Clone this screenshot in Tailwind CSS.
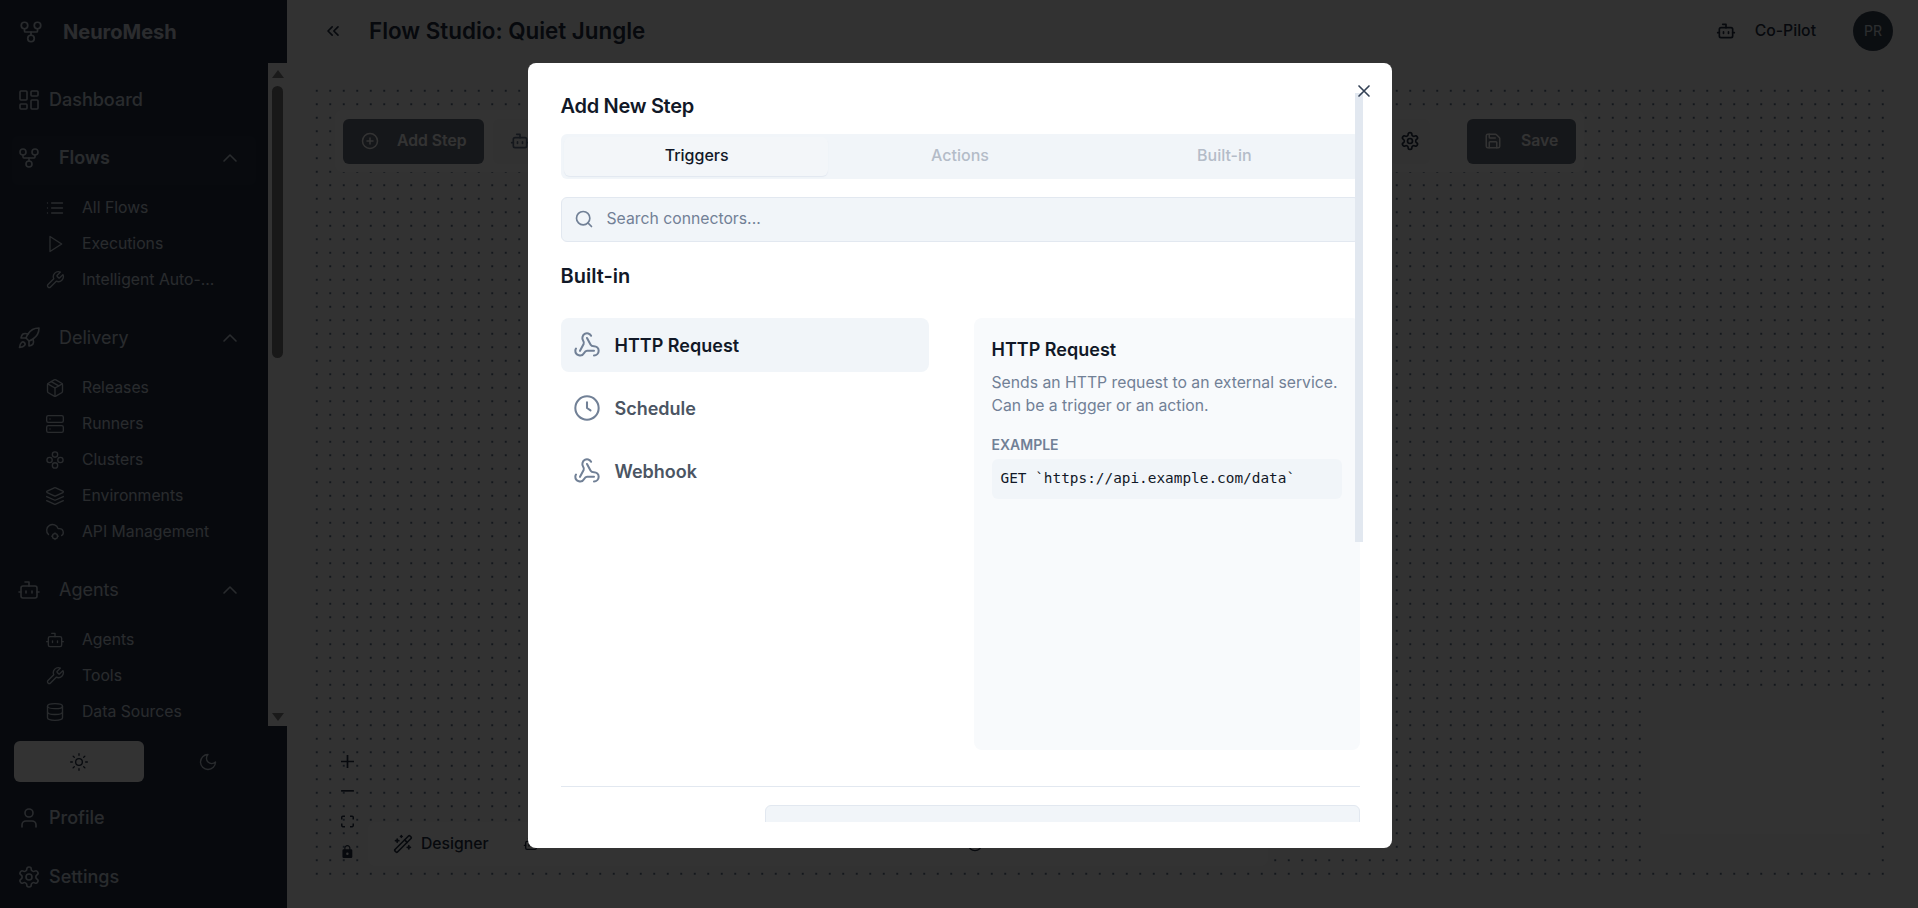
<!DOCTYPE html>
<html lang="en">
<head>
    <meta charset="UTF-8">
    <meta name="viewport" content="width=device-width, initial-scale=1.0">
    <title>Flow Studio: Quiet Jungle</title>
    <script src="https://cdn.jsdelivr.net/npm/@tailwindcss/browser@4"></script>
</head>
<body class="font-['Inter','Noto_Sans',sans-serif] overflow-hidden stroke-2">

    <!-- Icon sprite -->
    <svg class="hidden" xmlns="http://www.w3.org/2000/svg">
        <symbol id="i-fork" viewBox="0 0 24 24" fill="none" stroke="currentColor" stroke-linecap="round" stroke-linejoin="round"><circle cx="12" cy="18" r="3"/><circle cx="6" cy="6" r="3"/><circle cx="18" cy="6" r="3"/><path d="M18 9v2c0 .6-.4 1-1 1H7c-.6 0-1-.4-1-1V9"/><path d="M12 12v3"/></symbol>
        <symbol id="i-dash" viewBox="0 0 24 24" fill="none" stroke="currentColor" stroke-linecap="round" stroke-linejoin="round"><rect width="7" height="9" x="3" y="3" rx="1"/><rect width="7" height="5" x="14" y="3" rx="1"/><rect width="7" height="9" x="14" y="12" rx="1"/><rect width="7" height="5" x="3" y="16" rx="1"/></symbol>
        <symbol id="i-rocket" viewBox="0 0 24 24" fill="none" stroke="currentColor" stroke-linecap="round" stroke-linejoin="round"><path d="M4.5 16.5c-1.5 1.26-2 5-2 5s3.74-.5 5-2c.71-.84.7-2.13-.09-2.91a2.18 2.18 0 0 0-2.91-.09z"/><path d="m12 15-3-3a22 22 0 0 1 2-3.95A12.88 12.88 0 0 1 22 2c0 2.72-.78 7.5-6 11a22.35 22.35 0 0 1-4 2z"/><path d="M9 12H4s.55-3.03 2-4c1.62-1.08 5 0 5 0"/><path d="M12 15v5s3.03-.55 4-2c1.08-1.62 0-5 0-5"/></symbol>
        <symbol id="i-up" viewBox="0 0 24 24" fill="none" stroke="currentColor" stroke-linecap="round" stroke-linejoin="round"><path d="m18 15-6-6-6 6"/></symbol>
        <symbol id="i-list" viewBox="0 0 24 24" fill="none" stroke="currentColor" stroke-linecap="round" stroke-linejoin="round"><path d="M3 12h.01M3 18h.01M3 6h.01M8 12h13M8 18h13M8 6h13"/></symbol>
        <symbol id="i-play" viewBox="0 0 24 24" fill="none" stroke="currentColor" stroke-linecap="round" stroke-linejoin="round"><polygon points="6 3 20 12 6 21 6 3"/></symbol>
        <symbol id="i-wrench" viewBox="0 0 24 24" fill="none" stroke="currentColor" stroke-linecap="round" stroke-linejoin="round"><path d="M14.7 6.3a1 1 0 0 0 0 1.4l1.6 1.6a1 1 0 0 0 1.4 0l3.77-3.77a6 6 0 0 1-7.94 7.94l-6.91 6.91a2.12 2.12 0 0 1-3-3l6.91-6.91a6 6 0 0 1 7.94-7.94l-3.76 3.76z"/></symbol>
        <symbol id="i-package" viewBox="0 0 24 24" fill="none" stroke="currentColor" stroke-linecap="round" stroke-linejoin="round"><path d="m7.5 4.27 9 5.15"/><path d="M21 8a2 2 0 0 0-1-1.73l-7-4a2 2 0 0 0-2 0l-7 4A2 2 0 0 0 3 8v8a2 2 0 0 0 1 1.73l7 4a2 2 0 0 0 2 0l7-4A2 2 0 0 0 21 16Z"/><path d="m3.3 7 8.7 5 8.7-5"/><path d="M12 22V12"/></symbol>
        <symbol id="i-server" viewBox="0 0 24 24" fill="none" stroke="currentColor" stroke-linecap="round" stroke-linejoin="round"><rect width="20" height="8" x="2" y="2" rx="2"/><rect width="20" height="8" x="2" y="14" rx="2"/><path d="M6 6h.01M6 18h.01"/></symbol>
        <symbol id="i-cluster" viewBox="0 0 24 24" fill="none" stroke="currentColor" stroke-linecap="round" stroke-linejoin="round"><circle cx="12" cy="5.5" r="3.2"/><circle cx="12" cy="18.5" r="3.2"/><circle cx="5.5" cy="12" r="3.2"/><circle cx="18.5" cy="12" r="3.2"/></symbol>
        <symbol id="i-layers" viewBox="0 0 24 24" fill="none" stroke="currentColor" stroke-linecap="round" stroke-linejoin="round"><path d="M12.83 2.18a2 2 0 0 0-1.66 0L2.6 6.08a1 1 0 0 0 0 1.83l8.58 3.91a2 2 0 0 0 1.66 0l8.58-3.9a1 1 0 0 0 0-1.83Z"/><path d="m22 17.65-9.17 4.16a2 2 0 0 1-1.66 0L2 17.65"/><path d="m22 12.65-9.17 4.16a2 2 0 0 1-1.66 0L2 12.65"/></symbol>
        <symbol id="i-cloud" viewBox="0 0 24 24" fill="none" stroke="currentColor" stroke-linecap="round" stroke-linejoin="round"><path d="M4.2 15.1A7 7 0 1 1 15.71 8h1.79a4.5 4.5 0 0 1 2.5 8.2"/><circle cx="12" cy="17" r="3"/><path d="M12 13v.5M12 20.5v.5M8 17h.5M15.5 17h.5"/></symbol>
        <symbol id="i-bot" viewBox="0 0 24 24" fill="none" stroke="currentColor" stroke-linecap="round" stroke-linejoin="round"><path d="M12 8V4H8"/><rect width="16" height="12" x="4" y="8" rx="2"/><path d="M2 14h2M20 14h2M15 13v2M9 13v2"/></symbol>
        <symbol id="i-db" viewBox="0 0 24 24" fill="none" stroke="currentColor" stroke-linecap="round" stroke-linejoin="round"><ellipse cx="12" cy="5" rx="9" ry="3"/><path d="M3 5V19A9 3 0 0 0 21 19V5"/><path d="M3 12A9 3 0 0 0 21 12"/></symbol>
        <symbol id="i-sun" viewBox="0 0 24 24" fill="none" stroke="currentColor" stroke-linecap="round" stroke-linejoin="round"><circle cx="12" cy="12" r="4"/><path d="M12 2v2M12 20v2M4.93 4.93l1.41 1.41M17.66 17.66l1.41 1.41M2 12h2M20 12h2M6.34 17.66l-1.41 1.41M19.07 4.93l-1.41 1.41"/></symbol>
        <symbol id="i-moon" viewBox="0 0 24 24" fill="none" stroke="currentColor" stroke-linecap="round" stroke-linejoin="round"><path d="M12 3a6 6 0 0 0 9 9 9 9 0 1 1-9-9Z"/></symbol>
        <symbol id="i-user" viewBox="0 0 24 24" fill="none" stroke="currentColor" stroke-linecap="round" stroke-linejoin="round"><path d="M19 21v-2a4 4 0 0 0-4-4H9a4 4 0 0 0-4 4v2"/><circle cx="12" cy="7" r="4"/></symbol>
        <symbol id="i-gear" viewBox="0 0 24 24" fill="none" stroke="currentColor" stroke-linecap="round" stroke-linejoin="round"><path d="M12.22 2h-.44a2 2 0 0 0-2 2v.18a2 2 0 0 1-1 1.73l-.43.25a2 2 0 0 1-2 0l-.15-.08a2 2 0 0 0-2.73.73l-.22.38a2 2 0 0 0 .73 2.73l.15.1a2 2 0 0 1 1 1.72v.51a2 2 0 0 1-1 1.74l-.15.09a2 2 0 0 0-.73 2.73l.22.38a2 2 0 0 0 2.73.73l.15-.08a2 2 0 0 1 2 0l.43.25a2 2 0 0 1 1 1.73V20a2 2 0 0 0 2 2h.44a2 2 0 0 0 2-2v-.18a2 2 0 0 1 1-1.73l.43-.25a2 2 0 0 1 2 0l.15.08a2 2 0 0 0 2.73-.73l.22-.39a2 2 0 0 0-.73-2.73l-.15-.08a2 2 0 0 1-1-1.74v-.5a2 2 0 0 1 1-1.74l.15-.09a2 2 0 0 0 .73-2.73l-.22-.38a2 2 0 0 0-2.73-.73l-.15.08a2 2 0 0 1-2 0l-.43-.25a2 2 0 0 1-1-1.73V4a2 2 0 0 0-2-2z"/><circle cx="12" cy="12" r="3"/></symbol>
        <symbol id="i-webhook" viewBox="0 0 24 24" fill="none" stroke="currentColor" stroke-linecap="round" stroke-linejoin="round"><path d="M18 16.98h-5.99c-1.1 0-1.95.94-2.48 1.9A4 4 0 0 1 2 17c.01-.7.2-1.4.57-2"/><path d="m6 17 3.13-5.78c.53-.97.1-2.18-.5-3.1a4 4 0 1 1 6.89-4.06"/><path d="m12 6 3.13 5.73C15.66 12.7 16.9 13 18 13a4 4 0 0 1 0 8"/></symbol>
        <symbol id="i-clock" viewBox="0 0 24 24" fill="none" stroke="currentColor" stroke-linecap="round" stroke-linejoin="round"><circle cx="12" cy="12" r="10"/><path d="M12 7v5l3 2"/></symbol>
        <symbol id="i-search" viewBox="0 0 24 24" fill="none" stroke="currentColor" stroke-linecap="round" stroke-linejoin="round"><path d="m21 21-4.3-4.3"/><circle cx="11" cy="11" r="8"/></symbol>
        <symbol id="i-x" viewBox="0 0 24 24" fill="none" stroke="currentColor" stroke-linecap="round" stroke-linejoin="round"><path d="M18 6 6 18M6 6l12 12"/></symbol>
        <symbol id="i-chevrons" viewBox="0 0 24 24" fill="none" stroke="currentColor" stroke-linecap="round" stroke-linejoin="round"><path d="m11 17-5-5 5-5M18 17l-5-5 5-5"/></symbol>
        <symbol id="i-plus-c" viewBox="0 0 24 24" fill="none" stroke="currentColor" stroke-linecap="round" stroke-linejoin="round"><circle cx="12" cy="12" r="10"/><path d="M8 12h8M12 8v8"/></symbol>
        <symbol id="i-save" viewBox="0 0 24 24" fill="none" stroke="currentColor" stroke-linecap="round" stroke-linejoin="round"><path d="M15.2 3a2 2 0 0 1 1.4.6l3.8 3.8a2 2 0 0 1 .6 1.4V19a2 2 0 0 1-2 2H5a2 2 0 0 1-2-2V5a2 2 0 0 1 2-2z"/><path d="M17 21v-7a1 1 0 0 0-1-1H8a1 1 0 0 0-1 1v7"/><path d="M7 3v4a1 1 0 0 0 1 1h7"/></symbol>
        <symbol id="i-wand" viewBox="0 0 24 24" fill="none" stroke="currentColor" stroke-linecap="round" stroke-linejoin="round"><path d="m21.64 3.64-1.28-1.28a1.21 1.21 0 0 0-1.72 0L2.36 18.64a1.21 1.21 0 0 0 0 1.72l1.28 1.28a1.2 1.2 0 0 0 1.72 0L21.64 5.36a1.2 1.2 0 0 0 0-1.72"/><path d="m14 7 3 3M5 6v4M19 14v4M10 2v2M7 8H3M21 16h-4M11 3H9"/></symbol>
    </svg>

    <div class="flex h-[908px] w-[1918px] bg-[#f8f9fa]">

        <!-- Sidebar -->
        <aside class="w-[287px] shrink-0 flex flex-col bg-[#243044] text-[#cbd5e1] stroke-[1.6]">
            <div class="h-[63px] shrink-0 flex items-center pl-[18px] gap-[19px]">
                <svg class="w-[26px] h-[26px]"><use href="#i-fork"/></svg>
                <span class="text-xl font-bold text-[#d5dce5]">NeuroMesh</span>
            </div>

            <div class="h-[663px] shrink-0 flex overflow-hidden">
                <nav class="w-[268px] shrink-0">
                    <a class="mt-[15px] h-[44px] flex items-center pl-[17px] gap-2 text-lg font-medium"><svg class="w-6 h-6"><use href="#i-dash"/></svg>Dashboard</a>

                    <div class="mt-[14px] mx-3 h-[49px] pb-[5px] pl-[5px] pr-[14px] flex items-center rounded-md bg-[#283549] text-lg font-semibold">
                        <svg class="w-6 h-6"><use href="#i-fork"/></svg>
                        <span class="ml-[18px] flex-1">Flows</span>
                        <svg class="w-6 h-6"><use href="#i-up"/></svg>
                    </div>
                    <div class="mt-[5px] pl-[45px] text-[15.75px]">
                        <a class="h-9 flex items-center gap-[17px]"><svg class="w-5 h-5"><use href="#i-list"/></svg>All Flows</a>
                        <a class="h-9 flex items-center gap-[17px]"><svg class="w-5 h-5"><use href="#i-play"/></svg>Executions</a>
                        <a class="h-9 flex items-center gap-[17px]"><svg class="w-5 h-5"><use href="#i-wrench"/></svg>Intelligent Auto-...</a>
                    </div>

                    <div class="mt-4 h-12 pl-[17px] pr-[26px] flex items-center text-lg">
                        <svg class="w-6 h-6"><use href="#i-rocket"/></svg>
                        <span class="ml-[18px] flex-1">Delivery</span>
                        <svg class="w-6 h-6"><use href="#i-up"/></svg>
                    </div>
                    <div class="mt-2 pl-[45px] text-[15.75px]">
                        <a class="h-9 flex items-center gap-[17px]"><svg class="w-5 h-5"><use href="#i-package"/></svg>Releases</a>
                        <a class="h-9 flex items-center gap-[17px]"><svg class="w-5 h-5"><use href="#i-server"/></svg>Runners</a>
                        <a class="h-9 flex items-center gap-[17px]"><svg class="w-5 h-5"><use href="#i-cluster"/></svg>Clusters</a>
                        <a class="h-9 flex items-center gap-[17px]"><svg class="w-5 h-5"><use href="#i-layers"/></svg>Environments</a>
                        <a class="h-9 flex items-center gap-[17px]"><svg class="w-5 h-5"><use href="#i-cloud"/></svg>API Management</a>
                    </div>

                    <div class="mt-4 h-12 pl-[17px] pr-[26px] flex items-center text-lg">
                        <svg class="w-6 h-6"><use href="#i-bot"/></svg>
                        <span class="ml-[18px] flex-1">Agents</span>
                        <svg class="w-6 h-6"><use href="#i-up"/></svg>
                    </div>
                    <div class="mt-2 pl-[45px] text-[15.75px]">
                        <a class="h-9 flex items-center gap-[17px]"><svg class="w-5 h-5"><use href="#i-bot"/></svg>Agents</a>
                        <a class="h-9 flex items-center gap-[17px]"><svg class="w-5 h-5"><use href="#i-wrench"/></svg>Tools</a>
                        <a class="h-9 flex items-center gap-[17px]"><svg class="w-5 h-5"><use href="#i-db"/></svg>Data Sources</a>
                    </div>
                </nav>

                <!-- Scrollbar -->
                <div class="w-[19px] shrink-0 bg-[#f8f9fa] flex flex-col items-center">
                    <svg class="w-3 h-2 mt-[7px] text-[#808080]" viewBox="0 0 12 8"><polygon points="6,0 12,8 0,8" fill="currentColor"/></svg>
                    <div class="w-[11px] h-[272px] mt-2 rounded-md bg-[#777]"></div>
                    <svg class="w-3 h-2 mt-[355px] text-[#808080]" viewBox="0 0 12 8"><polygon points="0,0 12,0 6,8" fill="currentColor"/></svg>
                </div>
            </div>

            <div class="mt-[15px] mx-[14px] grid grid-cols-2 h-[41px] shrink-0">
                <div class="rounded-md bg-white text-[#243044] flex items-center justify-center"><svg class="w-5 h-5"><use href="#i-sun"/></svg></div>
                <div class="flex items-center justify-center"><svg class="w-5 h-5"><use href="#i-moon"/></svg></div>
            </div>
            <a class="mt-[14px] h-[44px] shrink-0 flex items-center pl-[17px] gap-2 text-lg font-medium"><svg class="w-6 h-6"><use href="#i-user"/></svg>Profile</a>
            <a class="mt-[15px] h-[44px] shrink-0 flex items-center pl-[17px] gap-2 text-lg font-medium"><svg class="w-6 h-6"><use href="#i-gear"/></svg>Settings</a>
        </aside>

        <!-- Main -->
        <main class="flex-1 flex flex-col min-w-0 text-[#243044]">
            <header class="h-[62px] shrink-0 flex items-center pl-9 pr-[25px]">
                <svg class="w-5 h-5"><use href="#i-chevrons"/></svg>
                <h1 class="ml-[26px] flex-1 text-[22.4px] font-semibold">Flow Studio: Quiet Jungle</h1>
                <svg class="w-5 h-5"><use href="#i-bot"/></svg>
                <span class="ml-[19px] text-[15.75px] font-medium">Co-Pilot</span>
                <div class="ml-[37px] w-10 h-10 rounded-full bg-[#3b4658] text-[#dbe3ec] text-sm flex items-center justify-center">PR</div>
            </header>

            <!-- Canvas -->
            <section class="relative flex-1 mt-[22px] ml-[23px] mr-[33px] mb-[28px] bg-[radial-gradient(#64748b_0.7px,transparent_0.9px)] bg-[size:13.5px_13.5px]">
                <div class="absolute left-[25px] top-[26px] w-[1249px] h-[62px] rounded-lg bg-white flex items-center justify-between px-2">
                    <div class="flex items-center gap-[9px]">
                        <button class="w-[141px] h-[45px] rounded-md bg-[#6b7280] text-white flex items-center pl-[18px] gap-[18px] text-[15.75px] font-semibold"><svg class="w-[18px] h-[18px]"><use href="#i-plus-c"/></svg>Add Step</button>
                        <button class="w-[54px] h-[45px] rounded-md flex items-center justify-center bg-[#f8f9fa] text-[#64748b]"><svg class="w-5 h-5"><use href="#i-bot"/></svg></button>
                    </div>
                    <div class="flex items-center gap-[37px]">
                        <button class="w-10 h-[45px] rounded-md flex items-center justify-center bg-[#f8f9fa]"><svg class="w-5 h-5"><use href="#i-gear"/></svg></button>
                        <button class="w-[109px] h-[45px] rounded-md bg-[#6b7280] text-white flex items-center pl-[17px] gap-[19px] text-[15.75px] font-semibold"><svg class="w-[18px] h-[18px]"><use href="#i-save"/></svg>Save</button>
                    </div>
                </div>

                <!-- Zoom controls -->
                <div class="absolute left-[31px] bottom-[14px] flex flex-col text-[#243044]">
                    <div class="h-[30px] flex items-center justify-center"><svg class="w-[13px] h-[13px]" viewBox="0 0 32 32" fill="currentColor"><path d="M32 18.133H18.133V32h-4.266V18.133H0v-4.266h13.867V0h4.266v13.867H32z"/></svg></div>
                    <div class="h-[30px] flex items-center justify-center"><svg class="w-[13px] h-[2px]" viewBox="0 0 32 5" fill="currentColor"><path d="M0 0h32v4.2H0z"/></svg></div>
                    <div class="h-[30px] flex items-center justify-center"><svg class="w-[13px] h-[13px]" viewBox="0 0 32 30" fill="currentColor"><path d="M3.692 4.63c0-.53.4-.938.939-.938h5.215V0H4.708C2.13 0 0 2.054 0 4.63v5.216h3.692V4.631zM27.354 0h-5.2v3.692h5.17c.53 0 .984.4.984.939v5.215H32V4.631A4.624 4.624 0 0027.354 0zm.954 24.83c0 .532-.4.94-.939.94h-5.215v3.768h5.215c2.577 0 4.631-2.13 4.631-4.707v-5.139h-3.692v5.139zm-23.677.94c-.531 0-.939-.4-.939-.94v-5.138H0v5.139c0 2.577 2.13 4.707 4.708 4.707h5.138V25.77H4.631z"/></svg></div>
                    <div class="h-[30px] flex items-center justify-center"><svg class="w-[11px] h-[13px]" viewBox="0 0 25 32" fill="currentColor"><path d="M21.333 10.667H19.81V7.619C19.81 3.429 16.38 0 12.19 0c-4.114 0-7.524 3.429-7.524 7.619v3.048H3.048A3.056 3.056 0 000 13.714v15.238A3.056 3.056 0 003.048 32h18.285a3.056 3.056 0 003.048-3.048V13.714a3.056 3.056 0 00-3.048-3.047zM12.19 24.533a3.056 3.056 0 01-3.047-3.047 3.056 3.056 0 013.047-3.048 3.056 3.056 0 013.048 3.048 3.056 3.056 0 01-3.048 3.047zm4.724-13.866H7.467V7.619c0-2.59 2.133-4.724 4.723-4.724 2.591 0 4.724 2.133 4.724 4.724v3.048z"/></svg></div>
                </div>

                <!-- View tabs -->
                <div class="absolute left-[58px] bottom-[14px] w-[900px] h-[44px] rounded-lg bg-white flex items-center text-[15.75px] font-medium">
                    <svg class="ml-[25px] w-5 h-5"><use href="#i-wand"/></svg>
                    <span class="ml-2">Designer</span>
                    <svg class="ml-[34px] w-4 h-4"><use href="#i-bot"/></svg>
                    <svg class="ml-[428px] w-4 h-4"><use href="#i-clock"/></svg>
                </div>

                <!-- Minimap -->
                <div class="absolute right-[4px] bottom-[13px] w-[232px] h-[170px] bg-[#fbfbfb] flex items-center justify-center">
                    <div class="w-[210px] h-[104px] bg-white"></div>
                </div>
            </section>
        </main>
    </div>

    <!-- Dialog -->
    <div class="fixed inset-0 bg-black/80 flex items-start justify-center pt-[63px] pl-px">
        <div class="relative w-[864px] h-[785px] rounded-lg bg-white text-[#111827]">
            <div class="h-[759px] overflow-hidden pl-[33px] pr-8 pt-[27px]">
                <h2 class="text-xl font-semibold leading-8 h-8 tracking-[-0.015em]">Add New Step</h2>

                <div class="mt-[12px] h-[45px] rounded-md bg-[#f1f5f9] p-[3px] grid grid-cols-3 text-base font-medium text-[#b4bcc8]">
                    <div class="rounded-md bg-[#f3f6f9] shadow-[0_1px_1px_#e2e8f0] text-[#111827] flex items-center justify-center pb-1 pl-[2px]">Triggers</div>
                    <div class="flex items-center justify-center pb-1">Actions</div>
                    <div class="flex items-center justify-center pb-1">Built-in</div>
                </div>

                <div class="mt-[18px] h-[45px] rounded-md bg-[#f1f5f9] border border-[#e2e8f0] flex items-center pl-3 pb-px gap-[13px] text-[15.75px] text-[#718096]">
                    <svg class="w-5 h-5"><use href="#i-search"/></svg>
                    <span>Search connectors...</span>
                </div>

                <h3 class="mt-5 text-xl font-semibold leading-7">Built-in</h3>

                <div class="mt-[28px] flex h-[432px] justify-between">
                    <div class="w-[368px] flex flex-col gap-[9px] text-lg font-semibold text-[#4b5563] stroke-[1.75]">
                        <div class="h-[54px] rounded-lg bg-[#f1f5f9] text-[#111827] flex items-center pl-3 gap-[14px]"><svg class="w-7 h-7 text-[#718096]"><use href="#i-webhook"/></svg><span class="pt-[2px]">HTTP Request</span></div>
                        <div class="h-[54px] rounded-lg flex items-center pl-3 gap-[14px]"><svg class="w-7 h-7 text-[#718096]"><use href="#i-clock"/></svg><span class="pt-[2px]">Schedule</span></div>
                        <div class="h-[54px] rounded-lg flex items-center pl-3 gap-[14px]"><svg class="w-7 h-7 text-[#718096]"><use href="#i-webhook"/></svg><span class="pt-[2px]">Webhook</span></div>
                    </div>

                    <div class="w-[386px] rounded-lg bg-[#f8fafc] pt-[19px] px-[18px]">
                        <h4 class="text-lg font-semibold leading-[26px]">HTTP Request</h4>
                        <p class="mt-2 -mr-3 text-[15.75px] leading-[23px] text-[#718096]">Sends an HTTP request to an external service.<br>Can be a trigger or an action.</p>
                        <div class="mt-[18px] text-sm font-semibold leading-5 uppercase text-[#718096]">Example</div>
                        <div class="mt-1 h-10 rounded-md bg-[#f1f5f9] flex items-center pl-[9px] font-['DejaVu_Sans_Mono',monospace] text-[14.4px] whitespace-nowrap">GET `https://api.example.com/data`</div>
                    </div>
                </div>

                <div class="mt-[36px] border-t border-[#e2e8f0] pt-[18px]">
                    <div class="ml-[204px] h-12 rounded-md bg-[#f1f5f9] border border-[#e2e8f0]"></div>
                </div>
            </div>

            <!-- Scrollbar thumb and close -->
            <div class="absolute left-[827px] top-[30px] w-2 h-[449px] bg-[#e2e8f0]"></div>
            <button class="absolute left-[826px] top-[18px] w-5 h-5 text-[#334155]"><svg class="w-5 h-5"><use href="#i-x"/></svg></button>
        </div>
    </div>

</body>
</html>
